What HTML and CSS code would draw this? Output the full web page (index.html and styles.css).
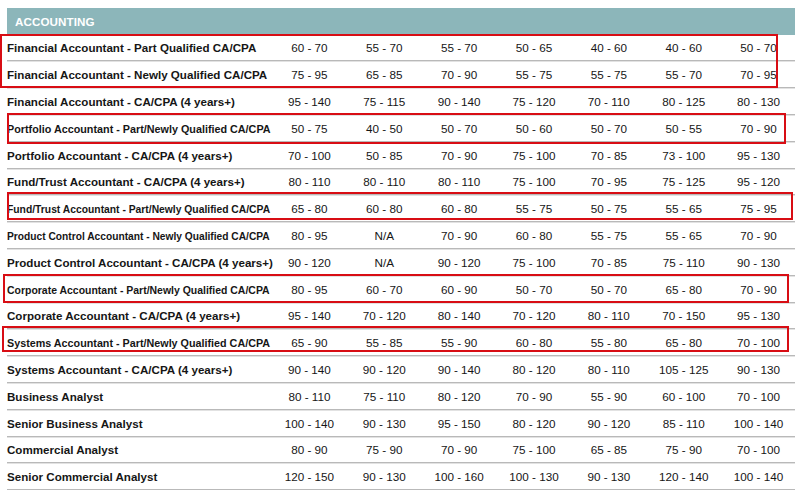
FILE: index.html
```html
<!DOCTYPE html>
<html>
<head>
<meta charset="utf-8">
<link rel="stylesheet" href="styles.css">
</head>
<body>
<div class="page">
  <div class="table">
    <div class="section">ACCOUNTING</div>
    <div class="row"><div class="label">Financial Accountant - Part Qualified CA/CPA</div><div class="v">60 - 70</div><div class="v">55 - 70</div><div class="v">55 - 70</div><div class="v">50 - 65</div><div class="v">40 - 60</div><div class="v">40 - 60</div><div class="v">50 - 70</div></div>
    <div class="row"><div class="label">Financial Accountant - Newly Qualified CA/CPA</div><div class="v">75 - 95</div><div class="v">65 - 85</div><div class="v">70 - 90</div><div class="v">55 - 75</div><div class="v">55 - 75</div><div class="v">55 - 70</div><div class="v">70 - 95</div></div>
    <div class="row"><div class="label">Financial Accountant - CA/CPA (4 years+)</div><div class="v">95 - 140</div><div class="v">75 - 115</div><div class="v">90 - 140</div><div class="v">75 - 120</div><div class="v">70 - 110</div><div class="v">80 - 125</div><div class="v">80 - 130</div></div>
    <div class="row"><div class="label"><span class="fit s95">Portfolio Accountant - Part/Newly Qualified CA/CPA</span></div><div class="v">50 - 75</div><div class="v">40 - 50</div><div class="v">50 - 70</div><div class="v">50 - 60</div><div class="v">50 - 70</div><div class="v">50 - 55</div><div class="v">70 - 90</div></div>
    <div class="row"><div class="label">Portfolio Accountant - CA/CPA (4 years+)</div><div class="v">70 - 100</div><div class="v">50 - 85</div><div class="v">70 - 90</div><div class="v">75 - 100</div><div class="v">70 - 85</div><div class="v">73 - 100</div><div class="v">95 - 130</div></div>
    <div class="row"><div class="label">Fund/Trust Accountant - CA/CPA (4 years+)</div><div class="v">80 - 110</div><div class="v">80 - 110</div><div class="v">80 - 110</div><div class="v">75 - 100</div><div class="v">70 - 95</div><div class="v">75 - 125</div><div class="v">95 - 120</div></div>
    <div class="row"><div class="label"><span class="fit s90">Fund/Trust Accountant - Part/Newly Qualified CA/CPA</span></div><div class="v">65 - 80</div><div class="v">60 - 80</div><div class="v">60 - 80</div><div class="v">55 - 75</div><div class="v">50 - 75</div><div class="v">55 - 65</div><div class="v">75 - 95</div></div>
    <div class="row"><div class="label"><span class="fit s89">Product Control Accountant - Newly Qualified CA/CPA</span></div><div class="v">80 - 95</div><div class="v">N/A</div><div class="v">70 - 90</div><div class="v">60 - 80</div><div class="v">55 - 75</div><div class="v">55 - 65</div><div class="v">70 - 90</div></div>
    <div class="row"><div class="label">Product Control Accountant - CA/CPA (4 years+)</div><div class="v">90 - 120</div><div class="v">N/A</div><div class="v">90 - 120</div><div class="v">75 - 100</div><div class="v">70 - 85</div><div class="v">75 - 110</div><div class="v">90 - 130</div></div>
    <div class="row"><div class="label"><span class="fit s91">Corporate Accountant - Part/Newly Qualified CA/CPA</span></div><div class="v">80 - 95</div><div class="v">60 - 70</div><div class="v">60 - 90</div><div class="v">50 - 70</div><div class="v">50 - 70</div><div class="v">65 - 80</div><div class="v">70 - 90</div></div>
    <div class="row"><div class="label">Corporate Accountant - CA/CPA (4 years+)</div><div class="v">95 - 140</div><div class="v">70 - 120</div><div class="v">80 - 140</div><div class="v">70 - 120</div><div class="v">80 - 110</div><div class="v">70 - 150</div><div class="v">95 - 130</div></div>
    <div class="row"><div class="label"><span class="fit s94">Systems Accountant - Part/Newly Qualified CA/CPA</span></div><div class="v">65 - 90</div><div class="v">55 - 85</div><div class="v">55 - 90</div><div class="v">60 - 80</div><div class="v">55 - 80</div><div class="v">65 - 80</div><div class="v">70 - 100</div></div>
    <div class="row"><div class="label">Systems Accountant - CA/CPA (4 years+)</div><div class="v">90 - 140</div><div class="v">90 - 120</div><div class="v">90 - 140</div><div class="v">80 - 120</div><div class="v">80 - 110</div><div class="v">105 - 125</div><div class="v">90 - 130</div></div>
    <div class="row"><div class="label">Business Analyst</div><div class="v">80 - 110</div><div class="v">75 - 110</div><div class="v">80 - 120</div><div class="v">70 - 90</div><div class="v">55 - 90</div><div class="v">60 - 100</div><div class="v">70 - 100</div></div>
    <div class="row"><div class="label">Senior Business Analyst</div><div class="v">100 - 140</div><div class="v">90 - 130</div><div class="v">95 - 150</div><div class="v">80 - 120</div><div class="v">90 - 120</div><div class="v">85 - 110</div><div class="v">100 - 140</div></div>
    <div class="row"><div class="label">Commercial Analyst</div><div class="v">80 - 90</div><div class="v">75 - 90</div><div class="v">70 - 90</div><div class="v">75 - 100</div><div class="v">65 - 85</div><div class="v">75 - 90</div><div class="v">70 - 100</div></div>
    <div class="row"><div class="label">Senior Commercial Analyst</div><div class="v">120 - 150</div><div class="v">90 - 130</div><div class="v">100 - 160</div><div class="v">100 - 130</div><div class="v">90 - 130</div><div class="v">120 - 140</div><div class="v">100 - 140</div></div>
  </div>
  <div class="mark m1"></div>
  <div class="mark m2"></div>
  <div class="mark m3"></div>
  <div class="mark m4"></div>
  <div class="mark m5"></div>
</div>
</body>
</html>
```

FILE: styles.css
```css
* { box-sizing: border-box; }
html, body { margin: 0; padding: 0; background: #ffffff; overflow: hidden; }
.page {
  position: relative;
  width: 795px;
  height: 490px;
  padding: 8px 0 0 7px;
  font-family: "Liberation Sans", Arial, sans-serif;
  color: #161616;
}
.table { display: flex; flex-direction: column; width: 789px; }
.section {
  height: 26.6px;
  background: #8cb6ba;
  color: #ffffff;
  font-weight: bold;
  font-size: 11.6px;
  letter-spacing: 0.1px;
  padding-left: 8px;
  display: flex;
  align-items: center;
}
.row {
  display: grid;
  grid-template-columns: 265px repeat(7, 1fr);
  height: 26.8px;
  align-items: center;
  border-bottom: 1px solid #b9b9b9;
  box-shadow: 0 1px 0 #e2e2e2;
}
.label { font-weight: bold; font-size: 11.6px; white-space: nowrap; padding-top: 1px; overflow: visible; }
.fit { display: inline-block; transform-origin: left center; }
.s95 { transform: scaleX(0.93); }
.s94 { transform: scaleX(0.928); }
.s91 { transform: scaleX(0.902); }
.s90 { transform: scaleX(0.89); }
.s89 { transform: scaleX(0.881); }
.v { text-align: center; font-size: 11.7px; white-space: nowrap; padding-top: 1px; }
.mark { position: absolute; border: 2px solid #d80d14; }
.m1 { left: 0; top: 34px; width: 778px; height: 54px; }
.m2 { left: 7px; top: 113px; width: 779px; height: 31px; }
.m3 { left: 7px; top: 192px; width: 786px; height: 28px; }
.m4 { left: 3px; top: 274px; width: 786px; height: 29px; }
.m5 { left: 2px; top: 326px; width: 787px; height: 26px; }
```
